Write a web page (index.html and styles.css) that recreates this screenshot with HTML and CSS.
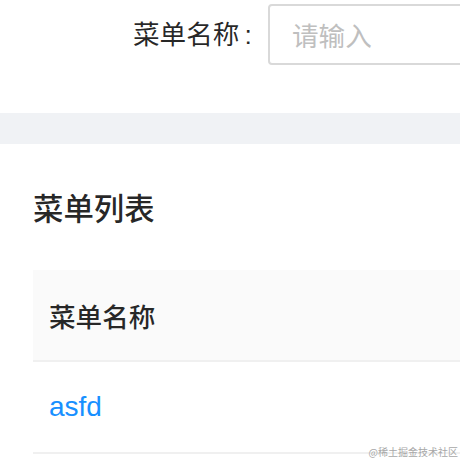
FILE: index.html
```html
<!DOCTYPE html>
<html lang="zh-CN">
<head>
<meta charset="utf-8">
<title>菜单列表</title>
<link rel="stylesheet" href="styles.css">
</head>
<body>
<div class="page">
  <div class="search">
    <div class="form-item">
      <label class="label">菜单名称<span class="colon">:</span></label>
      <div class="input"><span class="placeholder">请输入</span></div>
    </div>
  </div>
  <div class="band"></div>
  <div class="card">
    <div class="title">菜单列表</div>
    <div class="table">
      <div class="thead">菜单名称</div>
      <div class="row"><a class="link" href="#">asfd</a></div>
    </div>
  </div>
  <div class="watermark">@稀土掘金技术社区</div>
</div>
</body>
</html>
```
FILE: styles.css
```css
html, body {
  margin: 0;
  padding: 0;
  background: #ffffff;
}
body {
  font-family: "Liberation Sans", "Noto Sans CJK SC", sans-serif;
  color: rgba(0, 0, 0, 0.85);
}
.page {
  position: relative;
  width: 460px;
  height: 460px;
  overflow: hidden;
}
.search {
  height: 113px;
  padding-top: 4px;
  box-sizing: border-box;
}
.form-item {
  display: flex;
  align-items: center;
  padding-left: 133px;
  height: 61px;
}
.label {
  flex: 0 0 135px;
  font-size: 26.6px;
  line-height: 61px;
  padding-top: 2px;
  white-space: nowrap;
}
.colon {
  margin-left: 5px;
}
.input {
  flex: 0 0 320px;
  height: 61px;
  box-sizing: border-box;
  border: 2px solid #d9d9d9;
  border-radius: 4px;
  padding-left: 22px;
  display: flex;
  align-items: center;
}
.placeholder {
  font-size: 26.6px;
  color: #bfbfbf;
  white-space: nowrap;
}
.band {
  height: 31px;
  background: #f0f2f5;
}
.card {
  padding: 44px 0 0 33px;
}
.title {
  font-size: 30.4px;
  line-height: 42px;
  font-weight: 500;
  height: 42px;
  margin-bottom: 40px;
}
.table {
  width: 460px;
}
.thead {
  height: 90px;
  background: #fafafa;
  border-bottom: 2px solid #f0f0f0;
  display: flex;
  align-items: center;
  padding-left: 16px;
  font-size: 26.6px;
  font-weight: 500;
}
.row {
  height: 90px;
  border-bottom: 2px solid #f0f0f0;
  display: flex;
  align-items: center;
  padding-left: 16px;
  font-size: 28px;
}
.link {
  color: #1890ff;
  text-decoration: none;
}
.watermark {
  position: absolute;
  right: 2px;
  bottom: 2px;
  font-size: 10px;
  line-height: 13px;
  color: #a8a8a8;
  font-family: "Noto Sans CJK SC", sans-serif;
}
```
